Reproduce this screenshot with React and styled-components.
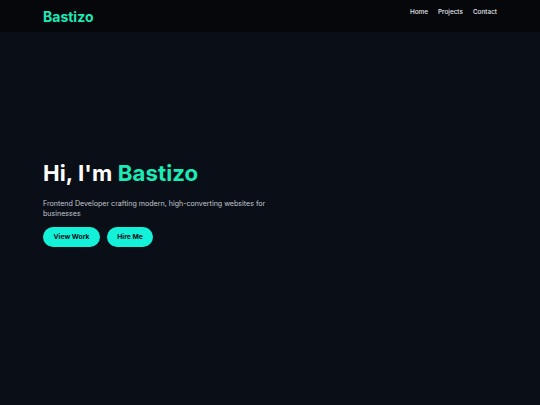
import React from "react";
import styled, { createGlobalStyle } from "styled-components";

const GlobalStyle = createGlobalStyle`
  * { box-sizing: border-box; }
  body {
    margin: 0;
    background: #0a0f17;
    font-family: "Inter", "Noto Sans", sans-serif;
  }
`;

const Page = styled.div`
  min-height: 405px;
  display: flex;
  flex-direction: column;
  background: #0a0f17;
`;

const Header = styled.header`
  height: 32px;
  background: #05070b;
  display: flex;
  align-items: center;
  justify-content: space-between;
  padding: 0 43px;
`;

const Logo = styled.div`
  color: #1de9b6;
  font-size: 14px;
  font-weight: 700;
  margin-top: 1px;
`;

const Nav = styled.nav`
  display: flex;
  gap: 10px;
  margin-top: -9px;
`;

const NavLink = styled.a`
  color: #e6e8ec;
  font-size: 6.4px;
  font-weight: 500;
  text-decoration: none;
`;

const Hero = styled.section`
  flex: 1;
  display: flex;
  flex-direction: column;
  justify-content: center;
  padding: 0 43px 32px;
`;

const Title = styled.h1`
  margin: 0;
  color: #ffffff;
  font-size: 22.2px;
  font-weight: 700;
  letter-spacing: 0.1px;

  span {
    color: #1de9b6;
  }
`;

const Lead = styled.p`
  margin: 13px 0 0;
  max-width: 235px;
  color: #c3c7cf;
  font-size: 7.1px;
  line-height: 10.5px;
`;

const Actions = styled.div`
  display: flex;
  gap: 7px;
  margin-top: 7px;
`;

const Button = styled.a`
  display: inline-flex;
  align-items: center;
  justify-content: center;
  height: 20px;
  width: ${(p) => p.$w}px;
  border-radius: 10px;
  background: #14f1d9;
  color: #0a0f17;
  font-size: 6.8px;
  font-weight: 700;
  text-decoration: none;
`;

export default function App() {
  return (
    <>
      <GlobalStyle />
      <Page>
        <Header>
          <Logo>Bastizo</Logo>
          <Nav>
            <NavLink href="#">Home</NavLink>
            <NavLink href="#">Projects</NavLink>
            <NavLink href="#">Contact</NavLink>
          </Nav>
        </Header>
        <Hero>
          <Title>
            Hi, I'm <span>Bastizo</span>
          </Title>
          <Lead>Frontend Developer crafting modern, high-converting websites for businesses</Lead>
          <Actions>
            <Button href="#" $w={57}>View Work</Button>
            <Button href="#" $w={46}>Hire Me</Button>
          </Actions>
        </Hero>
      </Page>
    </>
  );
}
